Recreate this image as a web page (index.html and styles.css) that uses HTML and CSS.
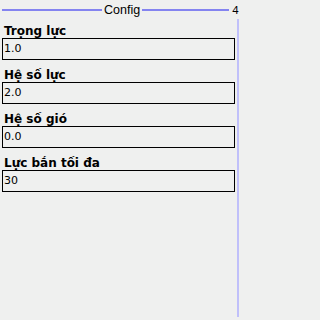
FILE: index.html
```html
<!DOCTYPE html>
<html>
<head>
<meta charset="utf-8">
<link rel="stylesheet" href="styles.css">
</head>
<body>
<div class="screen">
  <div class="header">
    <div class="rule rule-left"></div>
    <div class="title">Config</div>
    <div class="rule rule-right"></div>
    <div class="page">4</div>
  </div>
  <div class="main">
    <div class="form">
      <div class="field">
        <div class="label">Trọng lực</div>
        <div class="input">1.0</div>
      </div>
      <div class="field">
        <div class="label">Hệ số lực</div>
        <div class="input">2.0</div>
      </div>
      <div class="field">
        <div class="label">Hệ số gió</div>
        <div class="input">0.0</div>
      </div>
      <div class="field">
        <div class="label">Lực bắn tối đa</div>
        <div class="input">30</div>
      </div>
    </div>
    <div class="scrollbar"></div>
  </div>
</div>
</body>
</html>
```
FILE: styles.css
```css
html, body {
  margin: 0;
  padding: 0;
  background: #eff0ef;
}
.screen {
  width: 240px;
  height: 320px;
  display: flex;
  flex-direction: column;
  background: #eff0ef;
  color: #000;
  font-family: "Liberation Sans", Arial, sans-serif;
  overflow: hidden;
}
.header {
  height: 16px;
  flex: none;
  display: flex;
  align-items: flex-start;
  padding-left: 2px;
}
.rule {
  height: 2px;
  margin-top: 9px;
  background: #8484f0;
}
.rule-left {
  width: 100px;
}
.rule-right {
  width: 87px;
}
.title {
  font-size: 12.5px;
  line-height: 14px;
  padding-top: 3px;
  margin: 0 2px;
}
.page {
  font-size: 11.5px;
  line-height: 12px;
  padding-top: 4px;
  margin-left: 3px;
}
.main {
  flex: 1;
  display: flex;
  min-height: 0;
}
.form {
  width: 233px;
  margin-left: 2px;
  display: flex;
  flex-direction: column;
}
.label {
  height: 22px;
  box-sizing: border-box;
  display: flex;
  align-items: flex-end;
  padding: 0 0 1px 2px;
  font-family: "DejaVu Sans", sans-serif;
  font-weight: bold;
  font-size: 12px;
  line-height: 12px;
}
.input {
  height: 22px;
  box-sizing: border-box;
  border: 1px solid #000;
  padding-left: 1px;
  font-family: "DejaVu Sans", sans-serif;
  font-size: 11px;
  line-height: 20px;
}
.scrollbar {
  width: 2px;
  margin: 3px 1px 3px 2px;
  background: #c0c0fa;
}
```
